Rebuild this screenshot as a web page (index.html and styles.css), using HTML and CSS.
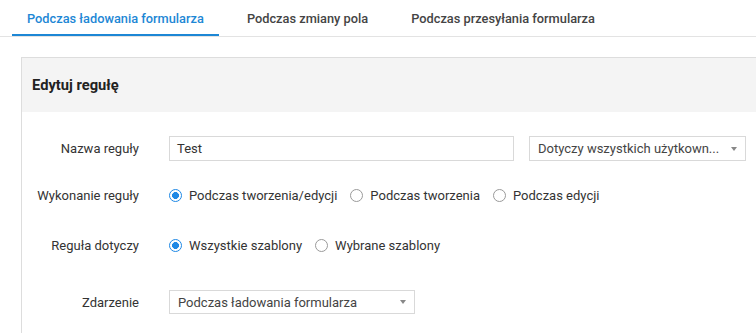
FILE: index.html
```html
<!DOCTYPE html>
<html lang="pl">
<head>
<meta charset="utf-8">
<title>Edytuj regułę</title>
<link rel="stylesheet" href="styles.css">
</head>
<body>
<nav class="tabs">
  <a class="tab active">Podczas ładowania formularza</a>
  <a class="tab">Podczas zmiany pola</a>
  <a class="tab">Podczas przesyłania formularza</a>
</nav>
<section class="panel">
  <header class="panel-head"><h2 class="title">Edytuj regułę</h2></header>
  <div class="panel-body">
    <div class="row row-name">
      <label class="label">Nazwa reguły</label>
      <div class="field">
        <div class="input">Test</div>
        <div class="select select-users"><span class="select-text">Dotyczy wszystkich użytkown...</span><span class="caret"></span></div>
      </div>
    </div>
    <div class="row row-exec">
      <label class="label">Wykonanie reguły</label>
      <div class="field radios">
        <span class="radio checked"><span class="dot"></span>Podczas tworzenia/edycji</span>
        <span class="radio"><span class="dot"></span>Podczas tworzenia</span>
        <span class="radio"><span class="dot"></span>Podczas edycji</span>
      </div>
    </div>
    <div class="row row-applies">
      <label class="label">Reguła dotyczy</label>
      <div class="field radios">
        <span class="radio checked"><span class="dot"></span>Wszystkie szablony</span>
        <span class="radio"><span class="dot"></span>Wybrane szablony</span>
      </div>
    </div>
    <div class="row row-event">
      <label class="label">Zdarzenie</label>
      <div class="field">
        <div class="select select-event"><span class="select-text">Podczas ładowania formularza</span><span class="caret"></span></div>
      </div>
    </div>
  </div>
</section>
</body>
</html>
```
FILE: styles.css
```css
html, body {
  margin: 0;
  padding: 0;
  background: #ffffff;
  height: 100%;
  overflow: hidden;
}
body {
  font-family: Roboto, "Noto Sans", "Liberation Sans", sans-serif;
  font-size: 13px;
  color: #333333;
  display: flex;
  flex-direction: column;
}
.tabs {
  display: flex;
  gap: 13px;
  padding-left: 12px;
  border-bottom: 1px solid #e3e3e3;
  height: 36px;
  flex-shrink: 0;
}
.tab {
  box-sizing: border-box;
  height: 36px;
  padding: 2px 15px 0;
  display: flex;
  align-items: center;
  font-weight: 500;
  font-size: 12.8px;
  color: #444444;
  border-bottom: 2px solid transparent;
}
.tab.active {
  color: #1d87d5;
  border-bottom-color: #1d87d5;
}
.panel {
  flex: 1;
  margin: 20px 0 0 21px;
  border-top: 1px solid #dddddd;
  border-left: 1px solid #dddddd;
  min-height: 0;
}
.panel-head {
  background: #f4f4f4;
  height: 54px;
  display: flex;
  align-items: center;
  padding-left: 10px;
}
.title {
  margin: 0;
  font-size: 14.7px;
  font-weight: 700;
  color: #222222;
}
.panel-body {
  padding-top: 24px;
}
.row {
  display: grid;
  grid-template-columns: 117px 1fr;
  column-gap: 30px;
  align-items: center;
}
.row-name { height: 25px; margin-bottom: 24px; }
.row-exec { height: 20px; margin-bottom: 30px; }
.row-applies { height: 20px; margin-bottom: 35px; }
.row-event { height: 24px; }
.label {
  text-align: right;
  color: #333333;
}
.field {
  display: flex;
  align-items: center;
}
.input {
  box-sizing: border-box;
  width: 345px;
  height: 25px;
  border: 1px solid #d9d9d9;
  padding-left: 7px;
  display: flex;
  align-items: center;
  color: #333333;
}
.select {
  box-sizing: border-box;
  height: 25px;
  border: 1px solid #d9d9d9;
  padding: 0 8px;
  display: flex;
  align-items: center;
  justify-content: space-between;
  color: #444444;
}
.select-users {
  margin-left: 15px;
  width: 217px;
}
.select-event {
  width: 246px;
  height: 24px;
}
.caret {
  width: 0;
  height: 0;
  border-left: 3.5px solid transparent;
  border-right: 3.5px solid transparent;
  border-top: 4px solid #888888;
}
.radios {
  gap: 13px;
}
.radio {
  display: inline-flex;
  align-items: center;
  gap: 7px;
  color: #333333;
}
.dot {
  box-sizing: border-box;
  width: 13px;
  height: 13px;
  border-radius: 50%;
  border: 1px solid #9a9a9a;
  background: #ffffff;
}
.radio.checked .dot {
  border: 1.5px solid #1e88e5;
  background: radial-gradient(circle, #1e88e5 0 3.2px, #ffffff 3.7px);
}
```
